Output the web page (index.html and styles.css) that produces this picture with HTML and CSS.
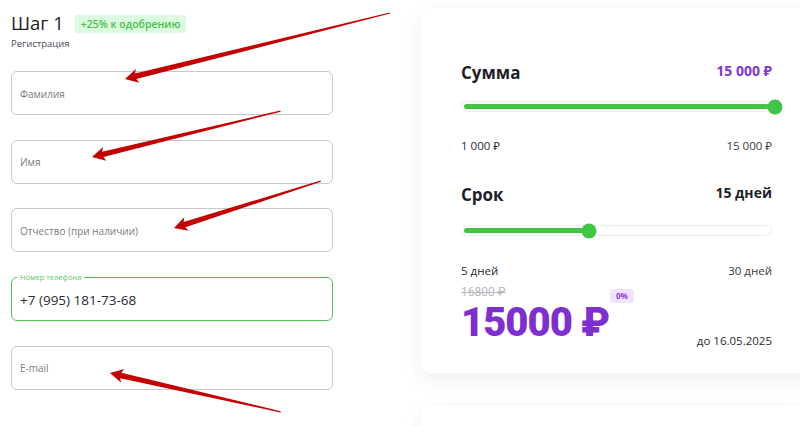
FILE: index.html
```html
<!DOCTYPE html>
<html lang="ru">
<head>
<meta charset="utf-8">
<title>Шаг 1</title>
<link rel="stylesheet" href="styles.css">
</head>
<body>
<div class="page">
  <section class="form-col">
    <div class="step-head">
      <h1 class="step-title">Шаг 1</h1>
      <span class="step-badge">+25% к одобрению</span>
    </div>
    <div class="step-sub">Регистрация</div>
    <div class="fields">
      <div class="field"><span class="placeholder">Фамилия</span></div>
      <div class="field"><span class="placeholder">Имя</span></div>
      <div class="field"><span class="placeholder">Отчество (при наличии)</span></div>
      <div class="field field-active">
        <span class="field-label">Номер телефона</span>
        <span class="value">+7 (995) 181-73-68</span>
      </div>
      <div class="field"><span class="placeholder">E-mail</span></div>
    </div>
  </section>

  <aside class="side">
    <div class="card">
      <div class="row-head">
        <span class="row-title">Сумма</span>
        <span class="row-value purple">15 000 ₽</span>
      </div>
      <div class="slider slider-first">
        <div class="slider-fill" style="width: 100%"></div>
        <div class="slider-thumb" style="left: 100%"></div>
      </div>
      <div class="range">
        <span>1 000 ₽</span>
        <span>15 000 ₽</span>
      </div>
      <div class="row-head row-term">
        <span class="row-title">Срок</span>
        <span class="row-value">15 дней</span>
      </div>
      <div class="slider slider-second">
        <div class="slider-fill" style="width: 41%"></div>
        <div class="slider-thumb" style="left: 41%"></div>
      </div>
      <div class="range range-days">
        <span>5 дней</span>
        <span>30 дней</span>
      </div>
      <div class="total">
        <div class="total-left">
          <div class="total-prices">
            <span class="old-price">16800 ₽</span>
            <span class="new-price">15000 ₽</span>
          </div>
          <span class="rate-badge">0%</span>
        </div>
        <span class="due">до 16.05.2025</span>
      </div>
    </div>
    <div class="card card-next"></div>
  </aside>
</div>

<svg class="arrows" width="800" height="426" viewBox="0 0 800 426" aria-hidden="true">
  <g fill="#c40000">
    <g transform="translate(125 79) rotate(-13.99)">
      <path d="M0 0 L13 -7 L11 -2.8 L273 -0.6 L273 0.6 L11 2.8 L13 7 Z"/>
    </g>
    <g transform="translate(92 157) rotate(-13.68)">
      <path d="M0 0 L13 -7 L11 -2.8 L194 -0.6 L194 0.6 L11 2.8 L13 7 Z"/>
    </g>
    <g transform="translate(174 228) rotate(-17.73)">
      <path d="M0 0 L13 -7 L11 -2.8 L154 -0.6 L154 0.6 L11 2.8 L13 7 Z"/>
    </g>
    <g transform="translate(110 373) rotate(12.85)">
      <path d="M0 0 L13 -7 L11 -2.8 L175 -0.6 L175 0.6 L11 2.8 L13 7 Z"/>
    </g>
  </g>
</svg>
</body>
</html>
```

FILE: styles.css
```css
* { box-sizing: border-box; }

html, body {
  margin: 0;
  padding: 0;
  background: #ffffff;
  font-family: "Open Sans", "Noto Sans", Arial, sans-serif;
  color: #1f1f2a;
  overflow: hidden;
  width: 800px;
  height: 426px;
}

.page {
  display: flex;
  align-items: flex-start;
  gap: 88px;
  padding-left: 11px;
  height: 426px;
  overflow: hidden;
}

/* ---------- left form ---------- */
.form-col {
  width: 322px;
  flex: none;
  padding-top: 9px;
}

.step-head {
  display: flex;
  align-items: center;
  gap: 11px;
  height: 28px;
}

.step-title {
  margin: 0;
  font-size: 18.5px;
  font-weight: 400;
  color: #1d1d28;
  line-height: 28px;
}

.step-badge {
  background: #dcfadf;
  color: #46c24c;
  font-size: 10.5px;
  font-weight: 600;
  padding: 2px 6px;
  border-radius: 3px;
  line-height: 14px;
  margin-top: 2px;
}

.step-sub {
  font-size: 9.5px;
  color: #4a4a52;
  margin-top: 1px;
  line-height: 12px;
}

.fields {
  display: flex;
  flex-direction: column;
  gap: 24.7px;
  margin-top: 21px;
}

.field {
  position: relative;
  height: 44px;
  border: 1px solid #c9c9cc;
  border-radius: 6px;
  display: flex;
  align-items: center;
  padding: 0 8px;
  background: #fff;
}

.placeholder {
  font-size: 10px;
  color: #7b7b82;
  margin-top: 1px;
}

.field-active {
  border: 1.5px solid #4cc552;
}

.field-label {
  position: absolute;
  left: 5px;
  top: -6px;
  background: #fff;
  padding: 0 3px;
  font-size: 7.5px;
  line-height: 10px;
  color: #5cc862;
}

.value {
  font-size: 13.5px;
  color: #2a2a33;
  margin-top: 2px;
}

/* ---------- right side ---------- */
.side {
  flex: none;
  width: 391px;
  padding-top: 8px;
  display: flex;
  flex-direction: column;
  gap: 33px;
}

.card {
  background: #fff;
  border-radius: 9px;
  box-shadow: 0 6px 22px rgba(0, 0, 0, 0.07);
  padding: 52px 40px 0 40px;
  height: 365px;
  flex: none;
}

.card-next {
  height: 60px;
  padding: 0;
}

.row-head {
  display: flex;
  justify-content: space-between;
  align-items: center;
  height: 24px;
}

.row-title {
  font-size: 17px;
  font-weight: 700;
  color: #1f1f2a;
}

.row-value {
  font-size: 14px;
  font-weight: 700;
  color: #1f1f2a;
  margin-top: -4px;
}

.purple { color: #8236d6; }

.slider {
  position: relative;
  height: 11px;
  border: 1px solid #ececec;
  border-radius: 6px;
  background: #fff;
}

.slider-first { margin-top: 17px; }
.slider-second { margin-top: 19px; }

.slider-fill {
  position: absolute;
  left: 2px;
  top: 2px;
  height: 5px;
  border-radius: 3px;
  background: #42c445;
  max-width: calc(100% - 4px);
}

.slider-thumb {
  position: absolute;
  top: 50%;
  width: 15px;
  height: 15px;
  border-radius: 50%;
  background: #42c445;
  transform: translate(-50%, -50%);
  margin-left: 4px;
}

.slider-second .slider-thumb { margin-left: 0; }

.range {
  display: flex;
  justify-content: space-between;
  font-size: 11.5px;
  line-height: 16px;
  color: #2a2a33;
  margin-top: 26px;
}

.range span:last-child { color: #3a3a42; }

.row-term { margin-top: 28px; }

.range-days { margin-top: 27px; }

.total {
  display: flex;
  justify-content: space-between;
  align-items: flex-end;
  margin-top: 7px;
}

.total-left {
  display: flex;
  align-items: flex-start;
  gap: 1px;
}

.total-prices {
  display: flex;
  flex-direction: column;
  gap: 5px;
  font-family: Roboto, "Open Sans", Arial, sans-serif;
}

.old-price {
  font-size: 12px;
  line-height: 12px;
  color: #b9b9bd;
  text-decoration: line-through;
}

.new-price {
  font-size: 40px;
  line-height: 40px;
  font-weight: 900;
  letter-spacing: -1px;
  color: #7e2fcf;
}

.rate-badge {
  margin-top: 3px;
  background: #f1e2fd;
  color: #8a3fd8;
  font-size: 8px;
  font-weight: 700;
  padding: 2px 6px;
  border-radius: 3px;
  line-height: 10px;
}

.due {
  font-size: 11.5px;
  color: #2a2a33;
  margin-bottom: -6px;
  line-height: 16px;
}

/* ---------- annotation arrows ---------- */
.arrows {
  position: absolute;
  left: 0;
  top: 0;
  pointer-events: none;
}
```
